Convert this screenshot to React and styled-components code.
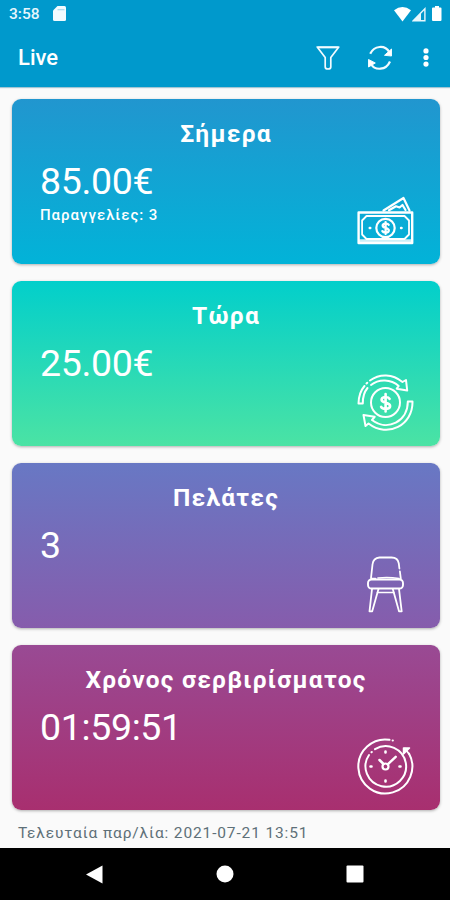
import React from 'react'
import styled, { createGlobalStyle } from 'styled-components'

const cards = [
  { title: 'Σήμερα', value: '85.00€', note: 'Παραγγελίες: 3', from: '#2196cf', to: '#02b3d8', icon: 'money' },
  { title: 'Τώρα', value: '25.00€', from: '#02cfcb', to: '#4be3a4', icon: 'cycle' },
  { title: 'Πελάτες', value: '3', from: '#6878c4', to: '#865cac', icon: 'chair' },
  { title: 'Χρόνος σερβιρίσματος', value: '01:59:51', from: '#994a94', to: '#a82f6f', icon: 'clock' }
]

const MoneyIcon = () => (
  <CardIcon viewBox="0 0 57 57">
    <g transform="translate(0 4.5)">
      <rect x="1.6" y="16" width="53.6" height="30.5" strokeWidth="2.4" />
      <path d="M9.500 19.500h38l4.500 4.500v14l-4.500 4.500h-38L5.100 38V24z" strokeWidth="1.800" />
      <path d="M3 44.500h51" strokeWidth="3.600" opacity=".8" />
      <path d="M26.500 14L46.500 1.500l6 12.500M32 13.800l7-4 3.500 1.200 3-2.500 3 5" strokeWidth="2.200" />
      <circle cx="28.500" cy="31.500" r="9.200" strokeWidth="2.200" />
      <path d="M31.700 28.300c-.8-1.500-6-1.800-6 .9 0 3 6.100 1.600 6.100 4.700 0 2.700-5.400 2.600-6.400.7M28.600 25.600v12" strokeWidth="2.300" />
      <path d="M12.700 31.500h.6M44 31.500h.6" strokeWidth="2.400" />
    </g>
  </CardIcon>
)

const CycleIcon = () => (
  <CardIcon viewBox="0 0 57 57">
    <circle cx="28.500" cy="28.500" r="14.500" strokeWidth="2" />
    <path d="M1.500 29.500C1.700 22 4 16 7.500 12M9.500 9.500l.8-.8M13 6.500C23-.6 35.500 0 45.500 8l3.500-2 1.200 10.500-10.500-1.800 2-2.700C34 5.200 22 4.600 14 11M10.500 14c-3.500 4.200-4.800 9.500-4.700 15.500H1.500" strokeWidth="2" />
    <path d="M55.500 27.500C56 51 31 64.500 11.500 49.500L8.500 52 6.500 41l11.200 1.800-2.700 3.200c15.500 11.800 36 1.500 35.800-18.500z" strokeWidth="2" />
    <path d="M32.600 24.800c-1.300-2.600-8-2.500-8 1 0 4 8.500 1.800 8.500 6.200 0 3.700-7.500 3.600-9 .8M28.600 20v17.500" strokeWidth="2.600" />
  </CardIcon>
)

const ChairIcon = () => (
  <CardIcon viewBox="0 0 57 57">
    <path d="M14 22l1.500-13.500C16 4.200 19 1.700 22.500 1.500h12c4.300 0 6.800 2.500 7.300 6l.6 5M42.900 15.500l.9 7" strokeWidth="1.800" />
    <rect x="11" y="23.500" width="35" height="9" rx="3.500" strokeWidth="1.900" />
    <path d="M14.500 22.500h4M21 22c7-.8 14-.6 21 .5" strokeWidth="1.700" />
    <path d="M15 33l-2.500 22.300h2.700L21.500 33M42 33l2.700 22.300h-2.700L35.800 33" strokeWidth="1.800" />
    <path d="M20.500 36.500h16.300" strokeWidth="1.600" />
  </CardIcon>
)

const ClockIcon = () => (
  <CardIcon viewBox="0 0 57 57">
    <path d="M32.500 1.800A27 27 0 1 0 52 15.500M35.600 2.600h.3" strokeWidth="2" />
    <path d="M18 11.200A20.300 20.300 0 1 1 12 17M14.500 14.300l.3-.3" strokeWidth="2" />
    <path d="M46.500 16V10h6z" strokeWidth="1.500" fill="#fff" />
    <path d="M48 10.500l4 5.500" strokeWidth="1.800" />
    <circle cx="28.500" cy="28.500" r="3" strokeWidth="2.200" />
    <path d="M26.500 26l-4-4M30.700 26.300l8-7.500" strokeWidth="2.500" />
    <path d="M28.500 13.500v1M28.500 42.500v1M13.500 28.500h1M42.500 28.500h1" strokeWidth="2.600" />
  </CardIcon>
)

const icons = { money: MoneyIcon, cycle: CycleIcon, chair: ChairIcon, clock: ClockIcon }

const StatCard = ({ title, value, note, from, to, icon }) => {
  const Icon = icons[icon]
  return (
    <Card $from={from} $to={to}>
      <Title>{title}</Title>
      <Value>{value}</Value>
      {note && <Note>{note}</Note>}
      <Icon />
    </Card>
  )
}

const App = () => (
  <Screen>
    <GlobalStyle />
    <Header>
      <StatusBar>
        <Clock>3:58</Clock>
        <svg width="13" height="16" viewBox="0 0 13 16" fill="#f2fbff">
          <path d="M4.500 0h7Q13 0 13 1.500v12q0 1.500-1.500 1.500h-10Q0 15 0 13.500V4.500z" />
          <path d="M4.500 3.700h7" stroke="#a9d9ee" strokeWidth="1.200" />
        </svg>
        <Signals>
          <svg width="17" height="15" viewBox="0 0 17 15" fill="#fff">
            <path d="M0 3.200Q8.500-3 17 3.200L8.500 14.500z" />
          </svg>
          <svg width="14" height="15" viewBox="0 0 14 15">
            <path d="M12.900 1.800v12H1.200z" fill="none" stroke="#e8f7fd" strokeWidth="1.400" />
            <path d="M1 14L9 5.800V14z" fill="#e8f7fd" />
            <path d="M10.300 7v5.500" stroke="#0099cc" strokeWidth="1" />
          </svg>
          <Battery width="10" height="16" viewBox="0 0 10 16" fill="#fff">
            <path d="M3 0h4v1.500h1.500Q9.500 1.500 9.500 2.500v11.500q0 1-1 1h-7.500Q0 15 0 14V2.500Q0 1.500 1 1.500h2z" />
          </Battery>
        </Signals>
      </StatusBar>
      <Toolbar>
        <AppName>Live</AppName>
        <ActionIcon width="24" height="26" viewBox="0 0 24 26">
          <path d="M1.200 2h21.600l-8 10.500v9.500q0 2-2.800 2t-2.800-2v-9.500z" strokeWidth="1.700" />
          <path d="M2 2.500h20" strokeWidth="1.700" />
        </ActionIcon>
        <ActionIcon width="26" height="26" viewBox="0 0 26 26" $left={27}>
          <path d="M3.200 8.800C7 .5 18-.6 22.400 7.300M23 16.500C19 25.500 8 26 3.800 18.700" strokeWidth="2.200" />
          <path d="M24.500 4v7l-7-.7zM1.500 22V14.500l6.800 3.500z" fill="#fff" strokeWidth="1" />
        </ActionIcon>
        <MoreIcon width="6" height="20" viewBox="0 0 6 20" fill="#fff">
          <circle cx="3" cy="2.900" r="2.600" />
          <circle cx="3" cy="9.500" r="2.600" />
          <circle cx="3" cy="16.100" r="2.600" />
        </MoreIcon>
      </Toolbar>
    </Header>
    <Content>
      {cards.map(card => <StatCard key={card.title} {...card} />)}
    </Content>
    <LastOrder>Τελευταία παρ/λία: 2021-07-21 13:51</LastOrder>
    <NavBar>
      <svg width="17" height="19" viewBox="0 0 17 19" fill="#fff"><path d="M0 9.500L16.500.5v18z" /></svg>
      <svg width="18" height="18" viewBox="0 0 18 18" fill="#fff"><circle cx="9" cy="9" r="8.500" /></svg>
      <svg width="18" height="18" viewBox="0 0 18 18" fill="#fff"><rect x=".5" y=".5" width="17" height="17" rx="1" /></svg>
    </NavBar>
  </Screen>
)

const GlobalStyle = createGlobalStyle`
  * {
    box-sizing: border-box;
  }
  body {
    margin: 0;
    font-family: Roboto, 'Noto Sans', sans-serif;
    background: #fafafa;
  }
`
const Screen = styled.div`
  width: 450px;
  height: 900px;
  display: flex;
  flex-direction: column;
  background: #fafafa;
  overflow: hidden;
`
const Header = styled.header`
  flex: none;
  height: 87px;
  background: #0099cc;
  color: #fff;
  box-shadow: 0 1px 1px rgba(0, 100, 140, .35);
`
const StatusBar = styled.div`
  height: 28px;
  padding: 0 8px 0 9px;
  display: flex;
  align-items: center;
`
const Clock = styled.span`
  width: 44px;
  font-size: 15.5px;
  font-weight: 500;
  line-height: 28px;
  color: #e6f6fc;
`
const Signals = styled.div`
  margin-left: auto;
  display: flex;
  align-items: center;
  gap: 1px;
`
const Battery = styled.svg`
  margin-left: 5px;
`
const Toolbar = styled.div`
  height: 59px;
  padding: 0 21px 0 18px;
  display: flex;
  align-items: center;
`
const AppName = styled.h1`
  margin: 0 auto 0 0;
  font-size: 22px;
  font-weight: 500;
  line-height: 61px;
`
const ActionIcon = styled.svg`
  margin-left: ${({ $left }) => $left || 0}px;
  fill: none;
  stroke: #f2fbff;
  stroke-linejoin: round;
`
const MoreIcon = styled.svg`
  margin-left: 30px;
`
const Content = styled.main`
  padding: 12px 10px 0 12px;
  display: flex;
  flex-direction: column;
  gap: 17.5px;
`
const Card = styled.section`
  position: relative;
  height: 164.5px;
  padding: 20px 28px 0;
  border-radius: 9px;
  color: #fff;
  background: linear-gradient(${({ $from, $to }) => `${$from}, ${$to}`});
  box-shadow: 0 1px 3px rgba(0, 0, 0, .3);
`
const Title = styled.h2`
  margin: 0;
  text-align: center;
  font-size: 24.5px;
  font-weight: 700;
  line-height: 30px;
  letter-spacing: 1.25px;
`
const Value = styled.div`
  margin-top: 9px;
  font-size: 37.5px;
  line-height: 46px;
  letter-spacing: -.35px;
`
const Note = styled.div`
  font-size: 15px;
  font-weight: 500;
  line-height: 22px;
  letter-spacing: .95px;
`
const CardIcon = styled.svg`
  position: absolute;
  right: 26px;
  bottom: 15px;
  width: 57px;
  height: 57px;
  fill: none;
  stroke: #fff;
  stroke-linecap: round;
  stroke-linejoin: round;
`
const LastOrder = styled.p`
  margin: 12px 0 0 18px;
  font-size: 15.5px;
  line-height: 22px;
  letter-spacing: .86px;
  color: #5e7078;
`
const NavBar = styled.nav`
  flex: none;
  height: 52px;
  margin-top: auto;
  padding: 0 86px;
  display: flex;
  align-items: center;
  justify-content: space-between;
  background: #000;
`

export default App
